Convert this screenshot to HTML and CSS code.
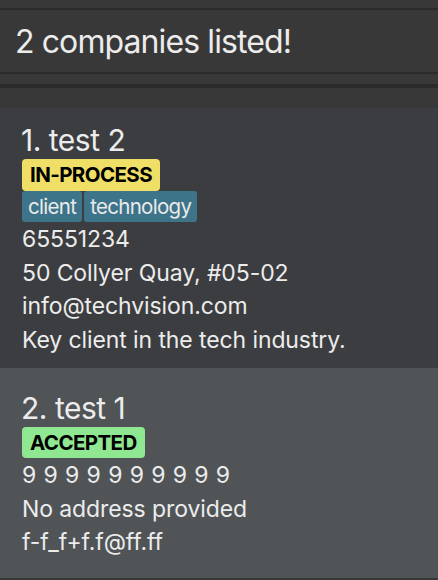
FILE: index.html
```html
<!DOCTYPE html>
<html>
<head>
<meta charset="utf-8">
<link rel="stylesheet" href="styles.css">
</head>
<body>
<div class="top-strip"></div>
<div class="result">2 companies listed!</div>
<div class="spacer"></div>
<div class="list-gap"></div>
<div class="list">
  <div class="card card-odd">
    <div class="title">1. test 2</div>
    <div class="row"><span class="badge badge-yellow">IN-PROCESS</span></div>
    <div class="row tags"><span class="tag">client</span><span class="tag">technology</span></div>
    <div class="line">65551234</div>
    <div class="line">50 Collyer Quay, #05-02</div>
    <div class="line">info@techvision.com</div>
    <div class="line">Key client in the tech industry.</div>
  </div>
  <div class="card card-even">
    <div class="title">2. test 1</div>
    <div class="row"><span class="badge badge-green">ACCEPTED</span></div>
    <div class="line line-spaced">9 9 9 9 9 9 9 9 9 9</div>
    <div class="line">No address provided</div>
    <div class="line">f-f_f+f.f@ff.ff</div>
  </div>
</div>
</body>
</html>
```

FILE: styles.css
```css
html, body {
  margin: 0;
  padding: 0;
  background: #383838;
  font-family: Inter, "Noto Sans", sans-serif;
  color: #ececec;
  height: 100%;
  overflow: hidden;
}
.top-strip {
  height: 8px;
  border-bottom: 2px solid #2b2b2b;
}
.result {
  height: 64px;
  box-sizing: border-box;
  padding: 12px 0 0 15px;
  font-size: 32px;
  line-height: 40px;
  letter-spacing: -0.9px;
  border-bottom: 2px solid #2b2b2b;
}
.spacer {
  height: 10px;
  border-bottom: 4px solid #2b2b2b;
}
.list-gap {
  height: 20px;
}
.card {
  padding: 0 22px;
  box-sizing: border-box;
}
.card-odd {
  background: #3c3d40;
  height: 260px;
  padding-top: 14px;
}
.card-even {
  background: #505457;
  height: 210px;
  padding-top: 22px;
}
.title {
  font-size: 30px;
  line-height: 36px;
  letter-spacing: -0.5px;
  margin-left: -1px;
  margin-bottom: 1px;
}
.row {
  display: flex;
}
.badge {
  color: #000;
  font-weight: 700;
  font-size: 20.5px;
  line-height: 32px;
  letter-spacing: -0.6px;
  padding: 0 8px;
  border-radius: 4px;
}
.card-even .badge { line-height: 31px; margin-bottom: 1px; }
.badge-yellow { background: #efdf66; }
.badge-green { background: #90e792; }
.tags { gap: 2px; margin-bottom: 1px; }
.tag {
  background: #3e7489;
  color: #eaeaea;
  font-size: 20.5px;
  line-height: 31px;
  letter-spacing: -0.7px;
  padding: 0 6px;
  border-radius: 3px;
}
.line {
  font-size: 23px;
  line-height: 33.5px;
  letter-spacing: -0.1px;
}
.line-spaced {
  word-spacing: 1px;
}
```
